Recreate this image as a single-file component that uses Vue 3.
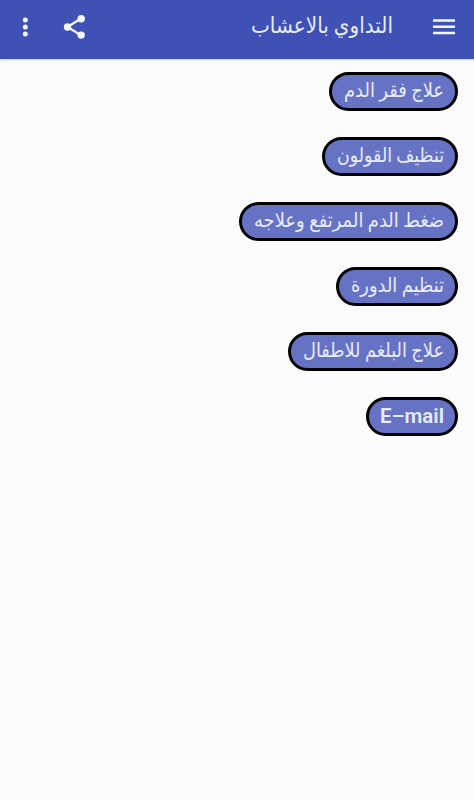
<template>
  <div class="app" dir="rtl">
    <header class="toolbar">
      <button class="icon-btn menu-btn" aria-label="القائمة">
        <svg width="24" height="18" viewBox="0 0 24 18">
          <path d="M1 1.2h22v2.5H1zM1 7.4h22v2.5H1zM1 13.8h22v2.5H1z" fill="#f5f7ff" />
        </svg>
      </button>
      <h1 class="title">
        <svg class="label" width="142" height="40">
          <text x="142" y="26" textLength="142" lengthAdjust="spacingAndGlyphs">التداوي بالاعشاب</text>
        </svg>
      </h1>
      <button class="icon-btn share-btn" aria-label="مشاركة">
        <svg width="24" height="26" viewBox="0 0 24 26">
          <path d="M18 4.5L4.5 13L18 21.2" fill="none" stroke="#f5f7ff" stroke-width="2.2" />
          <circle cx="18.2" cy="4.8" r="3.7" fill="#f5f7ff" />
          <circle cx="4.5" cy="13" r="3.7" fill="#f5f7ff" />
          <circle cx="18.2" cy="21.1" r="3.7" fill="#f5f7ff" />
        </svg>
      </button>
      <button class="icon-btn more-btn" aria-label="المزيد">
        <svg width="6" height="20" viewBox="0 0 6 20">
          <circle cx="3.3" cy="3" r="2.5" fill="#f5f7ff" />
          <circle cx="3.3" cy="10" r="2.5" fill="#f5f7ff" />
          <circle cx="3.3" cy="17" r="2.5" fill="#f5f7ff" />
        </svg>
      </button>
    </header>

    <main class="list">
      <button v-for="item in items" :key="item.text" class="pill" :class="{ latin: item.latin }">
        <svg class="label" :width="item.width" height="33">
          <text
            :x="item.latin ? 0 : item.width"
            :y="item.latin ? 23 : 22"
            :direction="item.latin ? 'ltr' : 'rtl'"
            :textLength="item.width"
            lengthAdjust="spacingAndGlyphs"
          >{{ item.text }}</text>
        </svg>
      </button>
    </main>
  </div>
</template>

<script setup>
// width — ширина надписи внутри кнопки
const items = [
  { text: 'علاج فقر الدم', width: 100 },
  { text: 'تنظيف القولون', width: 107 },
  { text: 'ضغط الدم المرتفع وعلاجه', width: 190 },
  { text: 'تنظيم الدورة', width: 93 },
  { text: 'علاج البلغم للاطفال', width: 141 },
  { text: 'E–mail', width: 64, latin: true }
];
</script>

<style>
body {
  background: #fbfbfb;
}
</style>

<style scoped>
.app {
  min-height: 800px;
  background: #fbfbfb;
  font-family: Roboto, 'DejaVu Sans', sans-serif;
}

.toolbar {
  display: flex;
  align-items: center;
  box-sizing: border-box;
  height: 59px;
  padding: 0 18px 6px 22px;
  background: #3f51b5;
  box-shadow: 0 1px 2px #c5cdf0;
}

.icon-btn {
  display: flex;
  padding: 0;
  border: none;
  background: none;
  cursor: pointer;
}

.title {
  margin: 0 39px 0 auto;
  font-size: 22px;
  font-weight: normal;
  line-height: 0;
}

.share-btn {
  margin-left: 35px;
}

.label {
  display: block;
  overflow: visible;
}

.label text {
  fill: #e8ecff;
}

.list {
  display: flex;
  flex-direction: column;
  align-items: flex-start;
  gap: 26px;
  padding: 13px 16px 0;
}

.pill {
  box-sizing: border-box;
  height: 39px;
  padding: 0 11.5px;
  border: 3px solid #000;
  border-radius: 20px;
  background: #6672c4;
  font-family: inherit;
  font-size: 20px;
  cursor: pointer;
}

.pill.latin {
  padding: 0 11px;
  font-size: 20.5px;
  font-weight: 600;
}
</style>
